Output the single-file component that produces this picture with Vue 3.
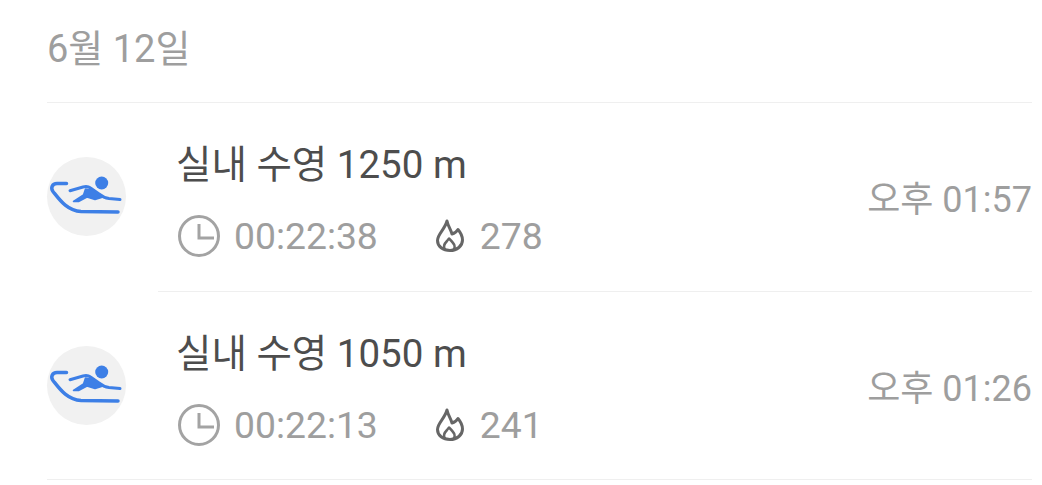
<script setup>
const rows = [
  { title: '실내 수영 1250 m', duration: '00:22:38', kcal: '278', time: '오후 01:57' },
  { title: '실내 수영 1050 m', duration: '00:22:13', kcal: '241', time: '오후 01:26' },
]
</script>

<template>
  <div class="page">
    <div class="date">6월 12일</div>
    <div class="list">
      <div v-for="row in rows" :key="row.title" class="row">
        <div class="badge">
          <svg width="79" height="79" viewBox="0 0 79 79">
            <circle cx="54.700" cy="26" r="6.500" fill="#3d7fe6" />
            <path d="M19.500 26.500H10C5 26.500 3.500 31 6 34.500C12 42 20 54 34 54.500L71 55" fill="none" stroke="#3d7fe6" stroke-width="3.500" stroke-linecap="round" />
            <path d="M23 33.700L36 30C39 29.300 41.500 29.500 43.500 31L52 37C55 39.500 58 41 62 41.500L73 42.500" fill="none" stroke="#3d7fe6" stroke-width="3" stroke-linecap="round" />
            <path d="M26.500 44.500L36.500 38L38.500 32L47 33L54.500 40.500L48 42.500L40 40L31.500 44.500Z" fill="#3d7fe6" stroke="#3d7fe6" stroke-width="1.500" stroke-linejoin="round" />
          </svg>
        </div>
        <div class="body">
          <div class="content">
            <div class="title">{{ row.title }}</div>
            <div class="meta">
              <svg class="clock" width="42" height="42" viewBox="0 0 42 42">
                <circle cx="21" cy="21" r="19.500" fill="none" stroke="#a3a3a3" stroke-width="3" />
                <path d="M21 9V23H36" fill="none" stroke="#a3a3a3" stroke-width="3" />
              </svg>
              <span class="duration">{{ row.duration }}</span>
              <svg class="flame" width="30" height="34" viewBox="0 0 30 34">
                <path d="M12 2C13 7 15.500 10 17 15C19 14.500 21.500 13 23 10.500C25.500 13.500 27.500 17 27.500 21C27.500 27 22 31.500 15 31.500C8 31.500 2.500 27.500 2.500 21.500C2.500 15 9.500 11 12 2Z" fill="none" stroke="#666" stroke-width="3" stroke-linejoin="round" />
                <path d="M10 30.500C7.500 27 9.500 24.500 12 22L14 19.500C16.500 22 19 24.500 19.500 26.500C20 28 19.500 29.500 18.500 30.500" fill="none" stroke="#666" stroke-width="2.500" stroke-linejoin="round" />
              </svg>
              <span class="kcal">{{ row.kcal }}</span>
            </div>
          </div>
          <div class="time">{{ row.time }}</div>
        </div>
      </div>
    </div>
  </div>
</template>

<style>
body {
  background: #fff;
}
</style>

<style scoped>
.page {
  width: 1042px;
  height: 485px;
  overflow: hidden;
  box-sizing: border-box;
  padding: 0 10px 0 47px;
  font-family: Roboto, "Noto Sans CJK KR", sans-serif;
}

.date {
  height: 103px;
  box-sizing: border-box;
  padding-top: 25px;
  font-size: 38px;
  line-height: 48px;
  color: #9e9e9e;
  border-bottom: 1px solid #efefef;
}

.row {
  display: flex;
  align-items: center;
  gap: 32px;
}

.badge {
  width: 79px;
  height: 79px;
  border-radius: 50%;
  background: #f1f1f1;
  flex: none;
  margin-top: -2px;
}

.body {
  flex: 1;
  height: 188px;
  display: flex;
  align-items: center;
  justify-content: space-between;
  border-bottom: 1px solid #efefef;
}

.content {
  padding-left: 19px;
  padding-top: 6px;
}

.row:last-child .body {
  height: 187px;
  margin-left: -111px;
  padding-left: 111px;
}

.row:last-child .content {
  padding-top: 8px;
}

.title {
  margin-left: -1px;
  font-size: 38.500px;
  line-height: 46px;
  color: #4d4d4d;
}

.meta {
  display: flex;
  align-items: center;
  margin-top: 25px;
  color: #9e9e9e;
  font-size: 37.300px;
  line-height: 46px;
}

.clock {
  margin-left: 1px;
  margin-right: 14px;
}

.flame {
  margin-left: 57px;
  margin-right: 15px;
}

.time {
  padding-bottom: 2px;
  font-size: 36px;
  color: #9e9e9e;
}
</style>
